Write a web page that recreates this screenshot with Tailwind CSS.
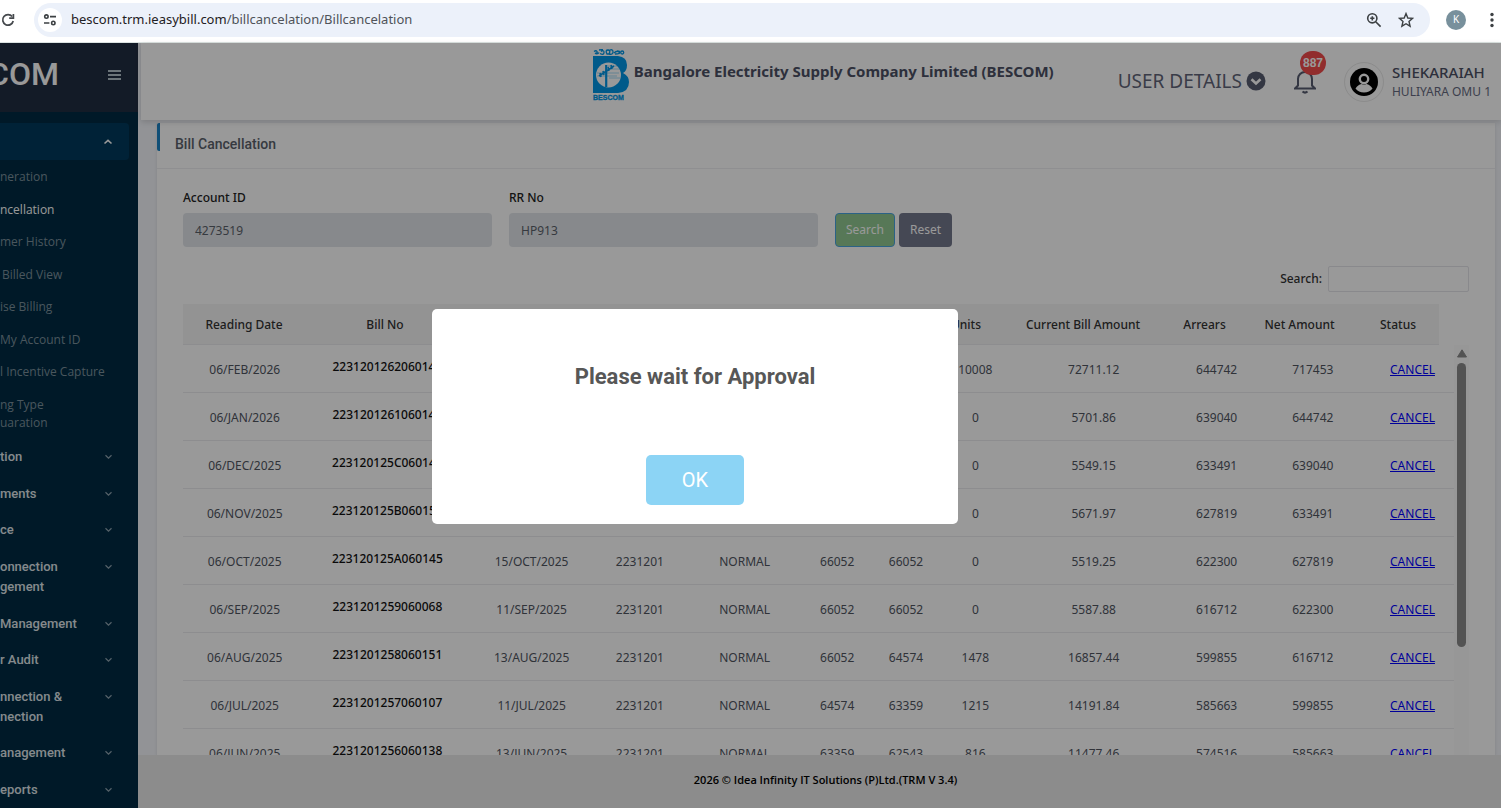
<!DOCTYPE html>
<html lang="en">

<head>
  <meta charset="UTF-8" />
  <title>Bill Cancellation - BESCOM</title>
  <meta name="viewport" content="width=device-width, initial-scale=1.0" />
  <script src="https://cdn.jsdelivr.net/npm/@tailwindcss/browser@4"></script>
</head>

<body class="h-screen flex flex-col overflow-hidden bg-white text-xs font-['Noto_Sans','Open_Sans',sans-serif]">

  <!-- Browser bar -->
  <div class="flex items-center h-[43px] pb-[3px] shrink-0 border-b border-[#dbe3e1]">
    <button aria-label="Reload" class="w-[34px] shrink-0">
      <svg width="16" height="16" viewBox="0 0 16 16" fill="none" stroke="#45494d" stroke-width="1.7">
        <path d="M12.2 4.6A5.3 5.3 0 1 0 13.2 9" />
        <path d="M13.4 2v4.2H9.2" />
      </svg>
    </button>
    <div class="flex items-center flex-1 h-[34px] rounded-full bg-[#ecf1fa] pl-1 pr-4">
      <span class="flex items-center justify-center size-6 rounded-full bg-white">
        <svg width="14" height="14" viewBox="0 0 14 14" fill="none" stroke="#3c4043" stroke-width="1.6">
          <circle cx="3.4" cy="3.6" r="1.7" />
          <path d="M7 3.6h6M1 10h5.4" />
          <circle cx="10.3" cy="10" r="1.7" />
        </svg>
      </span>
      <span class="flex-1 pl-[9px] text-[13px] text-[#1f2023]">bescom.trm.ieasybill.com<span class="text-[#4f5359]">/billcancelation/Billcancelation</span></span>
      <button aria-label="Zoom" class="mr-4">
        <svg width="16" height="16" viewBox="0 0 16 16" fill="none" stroke="#3c4043" stroke-width="1.6">
          <circle cx="6.3" cy="6.3" r="4.6" />
          <path d="M9.7 9.7 14.6 14.6M6.3 4.2v4.2M4.2 6.3h4.2" />
        </svg>
      </button>
      <button aria-label="Bookmark">
        <svg width="16" height="16" viewBox="0 0 16 16" fill="none" stroke="#3c4043" stroke-width="1.4">
          <path d="M8 1.6 9.8 6l4.8.4-3.6 3.1 1.1 4.7L8 11.7l-4.1 2.5L5 9.5 1.4 6.4 6.2 6z" />
        </svg>
      </button>
    </div>
    <span class="flex items-center justify-center size-5 ml-4 rounded-full bg-[#78909c] text-white text-[10px]">K</span>
    <button aria-label="Menu" class="ml-5 mr-[3px]">
      <svg width="12" height="16" viewBox="0 0 12 16" fill="#3c4043">
        <circle cx="6" cy="2.5" r="1.7" />
        <circle cx="6" cy="8" r="1.7" />
        <circle cx="6" cy="13.5" r="1.7" />
      </svg>
    </button>
  </div>

  <div class="relative flex flex-1 min-h-0">

    <!-- Sidebar -->
    <aside class="w-[138px] shrink-0 flex flex-col overflow-hidden bg-[#002b44] font-[Roboto,sans-serif]">
      <div class="flex items-center justify-between h-[69px] pr-4 pb-[6px] shrink-0 bg-[#212d41]">
        <span class="-ml-3 text-[32px] font-medium text-white">COM</span>
        <button aria-label="Toggle menu">
          <svg width="15" height="12" viewBox="0 0 15 12" stroke="#b5c3cb" stroke-width="2">
            <path d="M1 2h13M1 6h13M1 10h13" />
          </svg>
        </button>
      </div>

      <div class="flex items-center justify-end h-[37px] shrink-0 mt-[11px] mr-[9px] pr-4 rounded-r bg-[#003a5c]">
        <svg width="10" height="8" viewBox="0 0 10 8" fill="none" stroke="#fff" stroke-width="1.6">
          <path d="M1.5 5.5 5 2.3l3.5 3.2" />
        </svg>
      </div>

      <ul class="flex flex-col justify-between h-[264px] shrink-0 mt-2 text-xs leading-[18px] whitespace-nowrap text-[#7c909c] font-['Open_Sans',sans-serif]">
        <li><a href="#">neration</a></li>
        <li><a href="#" class="text-white">ncellation</a></li>
        <li><a href="#">mer History</a></li>
        <li><a href="#" class="pl-[2px]">Billed View</a></li>
        <li><a href="#">ise Billing</a></li>
        <li><a href="#">My Account ID</a></li>
        <li><a href="#">l Incentive Capture</a></li>
        <li><a href="#">ng Type<br>uaration</a></li>
      </ul>

      <ul id="sideMenu" class="flex flex-col justify-between h-[353px] shrink-0 mt-[15px] text-[13px] leading-5 font-medium text-[#dfe5e9]"></ul>
    </aside>

    <!-- Main column -->
    <div class="flex flex-col flex-1 min-w-0 bg-[#f3f5fa]">

      <header class="relative flex items-center justify-end h-[77px] shrink-0 ml-[3px] pr-[10px] bg-white shadow-[0_2px_6px_rgba(0,0,0,0.15)] whitespace-nowrap">
        <div class="flex items-center pb-[13px]">
          <svg width="36" height="52" viewBox="0 0 36 52" role="img" aria-label="BESCOM">
            <g fill="none" stroke="#0096e6" stroke-width="1.3">
              <path d="M1 2.5q2-1.500 3 0t-2 2q3 1 4-1M6 1l4-.5M8 2.500q3-2 3 1t-4 1M14 5q-2-4 1-4t1 4zM16 5q4 1 4-2t-3-2M21 4q3-3 5-1t-4 2M24 2q3 0 3 1.500" />
              <circle cx="29.2" cy="3.5" r="1.5" />
            </g>
            <path fill="#0096e6" d="M0 7h25q9 1 9 9 0 6-4 8 6 3 6 9 0 10-11 11H0z" />
            <circle cx="15.5" cy="26" r="12.5" fill="#fff" />
            <path d="M15 17h14M17 20h12M4 24h22M4 27h20M16 29h11" stroke="#0096e6" stroke-width=".6" fill="none" opacity=".6" />
            <path d="M13.2 16v22" stroke="#0096e6" stroke-width="2.2" />
            <path d="M6 27 21 17M7 24l1 4M10 22l1 4M15 18l1 4M18 16l1 4" stroke="#0096e6" stroke-width="1.6" fill="none" />
            <text x="0" y="51" font-family="Liberation Sans" font-size="7" font-weight="bold" fill="#0096e6" stroke="#0096e6" stroke-width=".3">BESCOM</text>
          </svg>
          <h1 class="ml-[5px] mb-[9px] text-[15px] font-bold text-[#4c5064]">Bangalore Electricity Supply Company Limited (BESCOM)</h1>
        </div>
        <button class="flex items-center gap-1 ml-16 text-[19px] text-[#5f6478]">
          USER DETAILS
          <svg width="20" height="20" viewBox="0 0 20 20">
            <circle cx="10" cy="10" r="9.5" fill="#575c70" />
            <path d="M5.5 8.2 10 12.5l4.5-4.3" fill="none" stroke="#fff" stroke-width="2.6" />
          </svg>
        </button>
        <button aria-label="Notifications" class="relative ml-7">
          <svg width="22" height="26" viewBox="0 0 22 26" fill="none" stroke="#575c70" stroke-width="2">
            <path d="M1 19.5h20L18 16.5V10a7 7 0 0 0-14 0v6.5z" />
            <path d="M8.5 22.5q2.5 2.2 5 0" />
          </svg>
          <span class="absolute -top-[18px] left-[6px] flex items-center justify-center w-[26px] h-6 rounded-full bg-[#f24c4c] text-xs font-bold text-white font-['Liberation_Sans',sans-serif]">887</span>
        </button>
        <div class="flex items-center gap-2 ml-7">
          <span class="flex items-center justify-center size-10 rounded-full border border-[#e8e8e8]">
            <svg width="28" height="28" viewBox="0 0 28 28">
              <circle cx="14" cy="14" r="14" fill="#000" />
              <circle cx="14" cy="11" r="4.2" fill="none" stroke="#fff" stroke-width="2.4" />
              <path d="M5.5 20.5q2.5-4 6-4.5 2.5 1.5 5 0 3.5.5 6 4.5-3 4-8.500 4t-8.500-4z" fill="#fff" />
            </svg>
          </span>
          <div class="leading-5">
            <p class="text-[15px] leading-5 font-medium text-[#4c5064]">SHEKARAIAH</p>
            <p class="text-xs leading-5 text-[#666a80]">HULIYARA OMU 1</p>
          </div>
        </div>
      </header>

      <main class="flex-1 min-h-0 overflow-hidden pt-[3px] pl-[19px] pr-[6px]">
        <section class="h-full bg-white shadow-sm">
          <div class="h-[46px] border-b border-[#efeff2]">
            <div class="h-7 border-l-[3px] border-[#1c84c6] rounded-xs pl-[15px] pt-[11px]">
              <h2 class="text-sm leading-5 font-medium text-[#5b626b] font-[Roboto,sans-serif]">Bill Cancellation</h2>
            </div>
          </div>

          <div class="pl-[26px] pr-[26px] pt-[19px]">
            <form class="flex items-end gap-[17px]">
              <div class="flex-[309]">
                <label for="accountId" class="block mb-[5px] leading-5 font-medium text-[#222]">Account ID</label>
                <input id="accountId" type="text" value="4273519" readonly class="block w-full h-[34px] px-3 rounded bg-[#e2e5e9] text-[#5b626b]" />
              </div>
              <div class="flex-[309]">
                <label for="rrNo" class="block mb-[5px] leading-5 font-medium text-[#222]">RR No</label>
                <input id="rrNo" type="text" value="HP913" readonly class="block w-full h-[34px] px-3 rounded bg-[#e2e5e9] text-[#5b626b]" />
              </div>
              <div class="flex flex-[634] gap-1">
                <button type="button" class="w-[60px] h-[34px] rounded border border-[#48a4e0] bg-[#92c992] text-white">Search</button>
                <button type="button" class="w-[53px] h-[34px] rounded bg-[#74788d] text-white">Reset</button>
              </div>
            </form>

            <div class="flex items-center justify-end gap-[6px] mt-[19px]">
              <label for="tableSearch" class="font-medium text-[#333]">Search:</label>
              <input id="tableSearch" type="search" class="w-[141px] h-[26px] px-2 rounded-xs border border-[#e4e4ea]" />
            </div>

            <div class="mt-3 pr-[30px]">
              <table class="w-full table-fixed text-center">
                <colgroup>
                  <col class="w-[122px]"><col class="w-[160px]"><col class="w-[125px]"><col class="w-[89px]">
                  <col class="w-[118px]"><col class="w-[65px]"><col class="w-[71px]"><col class="w-[66px]">
                  <col class="w-[168px]"><col class="w-[75px]"><col class="w-[115px]"><col class="w-[82px]">
                </colgroup>
                <thead>
                  <tr class="h-10 bg-[#f6f6f6] border-b border-[#ebebee] text-[#333] whitespace-nowrap">
                    <th class="pt-[3px] font-medium">Reading Date</th>
                    <th class="pt-[3px] font-medium">Bill No</th>
                    <th></th>
                    <th></th>
                    <th></th>
                    <th></th>
                    <th></th>
                    <th class="pt-[3px] font-medium">Units</th>
                    <th class="pt-[3px] font-medium">Current Bill Amount</th>
                    <th class="pt-[3px] font-medium">Arrears</th>
                    <th class="pt-[3px] font-medium">Net Amount</th>
                    <th class="pt-[3px] font-medium">Status</th>
                  </tr>
                </thead>
              </table>
            </div>

            <div class="flex h-[480px] overflow-hidden">
              <div class="flex-1 min-w-0">
                <table class="w-full table-fixed text-center text-[#50555f]">
                  <colgroup>
                    <col class="w-[122px]"><col class="w-[160px]"><col class="w-[125px]"><col class="w-[89px]">
                    <col class="w-[118px]"><col class="w-[65px]"><col class="w-[71px]"><col class="w-[66px]">
                    <col class="w-[168px]"><col class="w-[75px]"><col class="w-[115px]"><col class="w-[82px]">
                  </colgroup>
                  <tbody id="billRows"></tbody>
                </table>
              </div>
              <!-- Scroll track -->
              <div class="flex flex-col items-center w-[15px] pt-1 bg-[#fcfcfc]">
                <svg width="10" height="9" viewBox="0 0 10 9" fill="#8b8b8b">
                  <path d="M5 .8 9.5 8H.5z" stroke="#8b8b8b" stroke-linejoin="round" />
                </svg>
                <div class="w-[9px] h-[284px] mt-[5px] rounded-full bg-[#8b8b8b]"></div>
              </div>
            </div>
          </div>
        </section>
      </main>

      <footer class="relative flex items-center justify-center h-[53px] shrink-0 pl-3 pb-[3px] bg-[#e9e9e9] text-[11px] font-semibold text-black font-['Open_Sans',sans-serif]">
        2026 © Idea Infinity IT Solutions (P)Ltd.(TRM V 3.4)
      </footer>
    </div>

    <!-- Alert -->
    <div class="absolute inset-0 z-10 flex items-center justify-center pr-[111px] pb-[18px] bg-black/40">
      <div role="alertdialog" aria-labelledby="alertTitle" class="flex flex-col items-center w-[526px] h-[215px] pt-[52px] rounded-[5px] bg-white font-[Roboto,sans-serif]">
        <h2 id="alertTitle" class="text-[22px] leading-8 font-bold text-[#575757]">Please wait for Approval</h2>
        <button class="w-[98px] h-[50px] mt-[62px] rounded-[5px] bg-[#8cd4f5] text-xl text-white">OK</button>
      </div>
    </div>
  </div>

  <script>
    const menu = ['tion', 'ments', 'ce', 'onnection<br>gement', 'Management', 'r Audit', 'nnection &amp;<br>nection', 'anagement', 'eports'];

    document.getElementById('sideMenu').innerHTML = menu.map(label => `
      <li>
        <a href="#" class="flex items-start justify-between pr-[25px] whitespace-nowrap">
          <span>${label}</span>
          <svg class="mt-[6px]" width="9" height="8" viewBox="0 0 9 8" fill="none" stroke="#8fa3af" stroke-width="1.2">
            <path d="M1.5 2.3 4.5 5.2l3-2.9" />
          </svg>
        </a>
      </li>`).join('');

    // reading date, bill no, bill date, code, type, present, previous, units, amount, arrears, net
    const bills = [
      ['06/FEB/2026', '2231201262060145', '', '', '', '', '', '10008', '72711.12', '644742', '717453'],
      ['06/JAN/2026', '2231201261060145', '', '', '', '', '', '0', '5701.86', '639040', '644742'],
      ['06/DEC/2025', '223120125C060145', '', '', '', '', '', '0', '5549.15', '633491', '639040'],
      ['06/NOV/2025', '223120125B060150', '', '', '', '', '', '0', '5671.97', '627819', '633491'],
      ['06/OCT/2025', '223120125A060145', '15/OCT/2025', '2231201', 'NORMAL', '66052', '66052', '0', '5519.25', '622300', '627819'],
      ['06/SEP/2025', '2231201259060068', '11/SEP/2025', '2231201', 'NORMAL', '66052', '66052', '0', '5587.88', '616712', '622300'],
      ['06/AUG/2025', '2231201258060151', '13/AUG/2025', '2231201', 'NORMAL', '66052', '64574', '1478', '16857.44', '599855', '616712'],
      ['06/JUL/2025', '2231201257060107', '11/JUL/2025', '2231201', 'NORMAL', '64574', '63359', '1215', '14191.84', '585663', '599855'],
      ['06/JUN/2025', '2231201256060138', '13/JUN/2025', '2231201', 'NORMAL', '63359', '62543', '816', '11477.46', '574516', '585663']
    ];

    document.getElementById('billRows').innerHTML = bills.map(bill => `
      <tr class="h-12 border-b border-[#ebebee]">
        ${bill.map((value, i) => i === 1
          ? `<td class="pb-[3px] font-medium text-[#111]">${value}</td>`
          : `<td class="pt-[3px]">${value}</td>`).join('')}
        <td class="pt-[3px]"><a href="#" class="text-[#0000ff] underline">CANCEL</a></td>
      </tr>`).join('');
  </script>
</body>

</html>
